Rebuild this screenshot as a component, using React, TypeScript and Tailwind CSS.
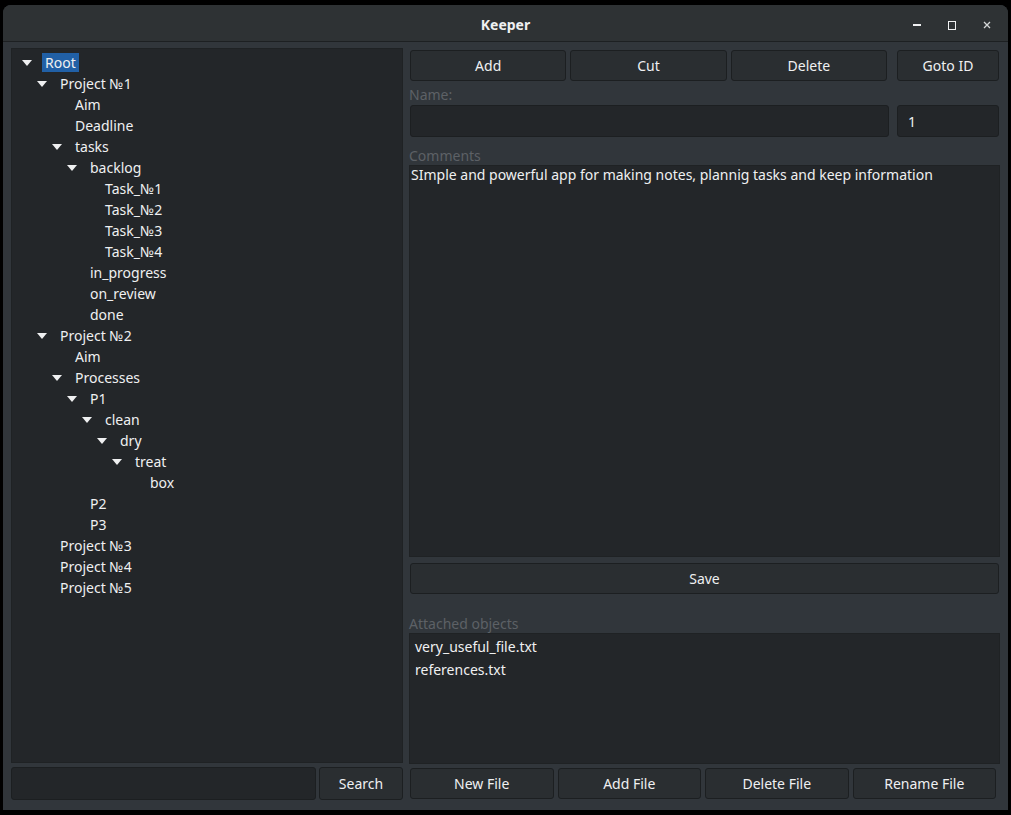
import React from "react";

type Node = { label: string; depth: number; open?: boolean; selected?: boolean };

const tree: Node[] = [
  { label: "Root", depth: 0, open: true, selected: true },
  { label: "Project №1", depth: 1, open: true },
  { label: "Aim", depth: 2 },
  { label: "Deadline", depth: 2 },
  { label: "tasks", depth: 2, open: true },
  { label: "backlog", depth: 3, open: true },
  { label: "Task_№1", depth: 4 },
  { label: "Task_№2", depth: 4 },
  { label: "Task_№3", depth: 4 },
  { label: "Task_№4", depth: 4 },
  { label: "in_progress", depth: 3 },
  { label: "on_review", depth: 3 },
  { label: "done", depth: 3 },
  { label: "Project №2", depth: 1, open: true },
  { label: "Aim", depth: 2 },
  { label: "Processes", depth: 2, open: true },
  { label: "P1", depth: 3, open: true },
  { label: "clean", depth: 4, open: true },
  { label: "dry", depth: 5, open: true },
  { label: "treat", depth: 6, open: true },
  { label: "box", depth: 7 },
  { label: "P2", depth: 3 },
  { label: "P3", depth: 3 },
  { label: "Project №3", depth: 1 },
  { label: "Project №4", depth: 1 },
  { label: "Project №5", depth: 1 },
];

const indents = ["pl-0", "pl-[15px]", "pl-[30px]", "pl-[45px]", "pl-[60px]", "pl-[75px]", "pl-[90px]", "pl-[105px]"];

function Btn({ children, className = "" }: { children: React.ReactNode; className?: string }) {
  return (
    <div
      className={
        "h-[31px] flex items-center justify-center rounded-[3px] border border-[#1c1f21] bg-[#2a2e31] text-[14px] text-[#eff0f1] " +
        className
      }
    >
      {children}
    </div>
  );
}

export default function App() {
  return (
    <div className="w-[1011px] h-[815px] bg-black pt-[5px] px-[3px] pb-[5px] font-['Noto_Sans',sans-serif]">
      <div className="h-full flex flex-col rounded-t-[8px] bg-[#31363b] overflow-hidden">
        {/* Title bar */}
        <div className="h-[37px] shrink-0 flex items-center pt-[2px] relative bg-[#2e3234] border-b border-[#1d2022]">
          <div className="flex-1 text-center text-[14px] font-bold text-[#eff0f1]">Keeper</div>
          <div className="absolute right-[17px] top-[2px] h-full flex items-center gap-[27px] text-[#eff0f1]">
            <div className="w-[8px] h-[2px] bg-[#eff0f1]" />
            <div className="w-[8px] h-[9px] border-[1.5px] border-[#eff0f1]" />
            <svg width="8" height="8" viewBox="0 0 8 8">
              <path d="M1 1L7 7M7 1L1 7" stroke="#d5d7d8" strokeWidth="1.3" />
            </svg>
          </div>
        </div>

        {/* Body */}
        <div className="flex-1 flex gap-[6px] pl-[8px] pr-[8px] pt-[6px] pb-[10px]">
          {/* Left column */}
          <div className="w-[392px] flex flex-col gap-[4px]">
            <div className="flex-1 bg-[#232629] border border-[#1f2224] pt-[3px] pl-[10px]">
              {tree.map((n, i) => (
                <div key={i} className={"h-[21px] flex items-center " + indents[n.depth]}>
                  <div className="w-[20px] shrink-0 flex items-center">
                    {n.open && (
                      <svg width="10" height="6" viewBox="0 0 10 6">
                        <path d="M0 0H10L5 6Z" fill="#eff0f1" />
                      </svg>
                    )}
                  </div>
                  <span
                    className={
                      "text-[14px] leading-[19px] px-[3px] text-[#eff0f1] " + (n.selected ? "bg-[#2160a6]" : "")
                    }
                  >
                    {n.label}
                  </span>
                </div>
              ))}
            </div>
            <div className="h-[33px] flex gap-[3px]">
              <div className="flex-1 rounded-[3px] border border-[#1c1f21] bg-[#232629]" />
              <Btn className="w-[84px] h-[33px]">Search</Btn>
            </div>
          </div>

          {/* Right column */}
          <div className="flex-1 flex flex-col">
            <div className="flex gap-[10px] mt-[2px] px-[1px]">
              <div className="flex-1 flex gap-[4px]">
                <Btn className="flex-1">Add</Btn>
                <Btn className="flex-1">Cut</Btn>
                <Btn className="flex-1">Delete</Btn>
              </div>
              <Btn className="w-[102px]">Goto ID</Btn>
            </div>
            <div className="mt-[4px] h-[20px] text-[14px] leading-[20px] text-[#5d6166]">Name:</div>
            <div className="flex gap-[8px] px-[1px]">
              <div className="flex-1 h-[32px] rounded-[3px] border border-[#1c1f21] bg-[#232629]" />
              <div className="w-[102px] h-[32px] rounded-[3px] border border-[#1c1f21] bg-[#232629] flex items-center pl-[10px] text-[14px] text-[#eff0f1]">
                1
              </div>
            </div>
            <div className="mt-[10px] h-[18px] text-[14px] leading-[18px] text-[#5d6166]">Comments</div>
            <div className="h-[392px] bg-[#232629] border border-[#1f2224] text-[14px] leading-[18px] text-[#eff0f1] pl-[1px]">
              SImple and powerful app for making notes, plannig tasks and keep information
            </div>
            <div className="mt-[6px] px-[1px]">
              <Btn>Save</Btn>
            </div>
            <div className="mt-[20px] h-[19px] text-[14px] leading-[19px] text-[#5d6166]">Attached objects</div>
            <div className="h-[131px] bg-[#232629] border border-[#1f2224] pt-[1px] pl-[5px] text-[14px] text-[#eff0f1]">
              <div className="h-[23px] flex items-center">very_useful_file.txt</div>
              <div className="h-[23px] flex items-center">references.txt</div>
            </div>
            <div className="mt-[4px] flex gap-[4px] pl-[1px] pr-[4px]">
              <Btn className="flex-1">New File</Btn>
              <Btn className="flex-1">Add File</Btn>
              <Btn className="flex-1">Delete File</Btn>
              <Btn className="flex-1">Rename File</Btn>
            </div>
          </div>
        </div>
      </div>
    </div>
  );
}
